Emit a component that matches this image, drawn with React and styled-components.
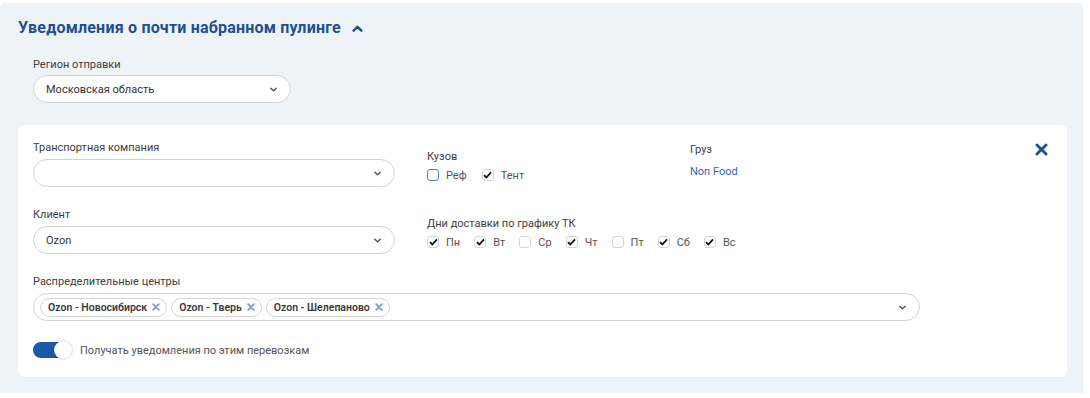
import React from 'react';
import styled, { createGlobalStyle } from 'styled-components';

const GlobalStyle = createGlobalStyle`
  body {
    margin: 0;
    background: #ffffff;
    font-family: Roboto, "Noto Sans", sans-serif;
    color: #3a3a3a;
  }
`;

const Panel = styled.section`
  margin-top: 3px;
  width: 1083px;
  height: 390px;
  box-sizing: border-box;
  padding: 15px 16px 0 18px;
  background: #eef3f7;
  border-radius: 6px 6px 0 0;
  box-shadow: 0 0 1px rgba(0, 0, 0, 0.08);
`;

const Title = styled.h2`
  margin: 0;
  display: flex;
  align-items: center;
  gap: 11px;
  font-size: 16px;
  line-height: 20px;
  font-weight: 700;
  letter-spacing: 0.2px;
  color: #1d4f91;
`;

const Region = styled.div`
  width: 258px;
  padding: 20px 0 0 15px;
`;

const Label = styled.div`
  font-size: 11px;
  line-height: 14px;
  color: #3d3d3d;
  margin-bottom: ${p => p.$mb ?? 4}px;
`;

const Select = styled.div`
  height: 28px;
  box-sizing: border-box;
  border: 1px solid #d2d2d2;
  border-radius: 14px;
  background: #fff;
  display: flex;
  align-items: center;
  padding: 0 ${p => p.$pr ?? 12}px 0 ${p => p.$pl ?? 12}px;
  font-size: 11px;
  color: #333;
  gap: 4px;
`;

const SelectValue = styled.span`
  flex: 1;
  display: flex;
  align-items: center;
  gap: 4px;
`;

const Card = styled.div`
  position: relative;
  margin-top: 22px;
  background: #fff;
  border-radius: 6px;
  padding: 16px 19px 19px 15px;
  box-shadow: 0 0 1px rgba(0, 0, 0, 0.06);
`;

const Grid = styled.div`
  display: grid;
  grid-template-columns: 362px 231px 1fr;
  column-gap: 32px;
  row-gap: 21px;
`;

const Field = styled.div`
  padding-top: ${p => p.$pt ?? 0}px;
  grid-column: ${p => p.$span || 'auto'};
`;

const Checks = styled.div`
  display: flex;
  gap: ${p => p.$gap ?? 15}px;
`;

const CheckItem = styled.label`
  display: flex;
  align-items: center;
  gap: 7px;
  font-size: 11px;
  color: #555;
  height: 16px;
`;

const Box = styled.span`
  width: 12px;
  height: 12px;
  box-sizing: border-box;
  border-radius: 3px;
  border: 1px solid ${p => (p.$accent ? '#5b7fb8' : '#d4d4d4')};
  display: flex;
  align-items: center;
  justify-content: center;
  background: #fff;
`;

const LinkText = styled.a`
  font-size: 11px;
  color: #2e64ae;
  text-decoration: none;
`;

const Chip = styled.span`
  display: inline-flex;
  align-items: center;
  gap: 5px;
  height: 19px;
  box-sizing: border-box;
  padding: 0 6px 0 7px;
  border: 1px solid #d6d6d6;
  border-radius: 10px;
  font-size: 10.5px;
  font-weight: 600;
  color: #3a3a3a;
`;

const Close = styled.button`
  position: absolute;
  top: 18px;
  right: 19px;
  border: 0;
  background: none;
  padding: 0;
  cursor: pointer;
  display: flex;
`;

const ToggleRow = styled.div`
  display: flex;
  align-items: center;
  gap: 9px;
  margin-top: 21px;
  font-size: 11px;
  color: #555;
`;

const Track = styled.span`
  position: relative;
  width: 38px;
  height: 16px;
  border-radius: 8px;
  background: #1a5aa8;
`;

const Knob = styled.span`
  position: absolute;
  right: -1px;
  top: -1px;
  width: 18px;
  height: 18px;
  border-radius: 50%;
  background: #fff;
  box-shadow: 0 0 2px rgba(0, 0, 0, 0.35);
`;

const Chevron = ({ up, color = '#555', size = 7 }) => (
  <svg width={size + 2} height={size} viewBox="0 0 10 7" fill="none">
    <path
      d={up ? 'M1.5 5.5 5 2l3.5 3.5' : 'M2 2l3 3 3-3'}
      stroke={color}
      strokeWidth={up ? 2.2 : 1.6}
      strokeLinecap="round"
      strokeLinejoin="round"
    />
  </svg>
);

const Tick = () => (
  <svg width="9" height="8" viewBox="0 0 9 8">
    <path d="M1 4.2l2.3 2.3L8 1.3" stroke="#111" strokeWidth="1.8" fill="none" />
  </svg>
);

const Cross = ({ size = 8, color = '#7d9cc8', w = 2.2 }) => (
  <svg width={size} height={size} viewBox="0 0 10 10">
    <path d="M1.5 1.5l7 7M8.5 1.5l-7 7" stroke={color} strokeWidth={w} strokeLinecap="round" />
  </svg>
);

const Check = ({ label, checked, accent }) => (
  <CheckItem>
    <Box $accent={accent}>{checked && <Tick />}</Box>
    {label}
  </CheckItem>
);

const days = [
  ['Пн', true], ['Вт', true], ['Ср', false], ['Чт', true],
  ['Пт', false], ['Сб', true], ['Вс', true],
];

const centers = ['Ozon - Новосибирск', 'Ozon - Тверь', 'Ozon - Шелепаново'];

export default function App() {
  return (
    <>
      <GlobalStyle />
      <Panel>
        <Title>
          Уведомления о почти набранном пулинге
          <Chevron up color="#1d4f91" size={9} />
        </Title>

        <Region>
          <Label $mb={3}>Регион отправки</Label>
          <Select>
            <SelectValue>Московская область</SelectValue>
            <Chevron />
          </Select>
        </Region>

        <Card>
          <Close aria-label="close">
            <Cross size={13} color="#1d4f91" w={2.2} />
          </Close>
          <Grid>
            <Field>
              <Label>Транспортная компания</Label>
              <Select>
                <SelectValue />
                <Chevron />
              </Select>
            </Field>
            <Field $pt={9}>
              <Label $mb={3}>Кузов</Label>
              <Checks>
                <Check label="Реф" accent />
                <Check label="Тент" checked />
              </Checks>
            </Field>
            <Field $pt={2}>
              <Label $mb={3}>Груз</Label>
              <LinkText href="#">Non Food</LinkText>
            </Field>

            <Field>
              <Label>Клиент</Label>
              <Select>
                <SelectValue>Ozon</SelectValue>
                <Chevron />
              </Select>
            </Field>
            <Field $pt={9}>
              <Label $mb={3}>Дни доставки по графику ТК</Label>
              <Checks $gap={14}>
                {days.map(([d, c]) => (
                  <Check key={d} label={d} checked={c} />
                ))}
              </Checks>
            </Field>
            <div />

            <Field $span="1 / 4">
              <Label>Распределительные центры</Label>
              <Select $pl={6} style={{ width: 887 }}>
                <SelectValue>
                  {centers.map(c => (
                    <Chip key={c}>
                      {c}
                      <Cross />
                    </Chip>
                  ))}
                </SelectValue>
                <Chevron />
              </Select>
            </Field>
          </Grid>

          <ToggleRow>
            <Track>
              <Knob />
            </Track>
            Получать уведомления по этим перевозкам
          </ToggleRow>
        </Card>
      </Panel>
    </>
  );
}
